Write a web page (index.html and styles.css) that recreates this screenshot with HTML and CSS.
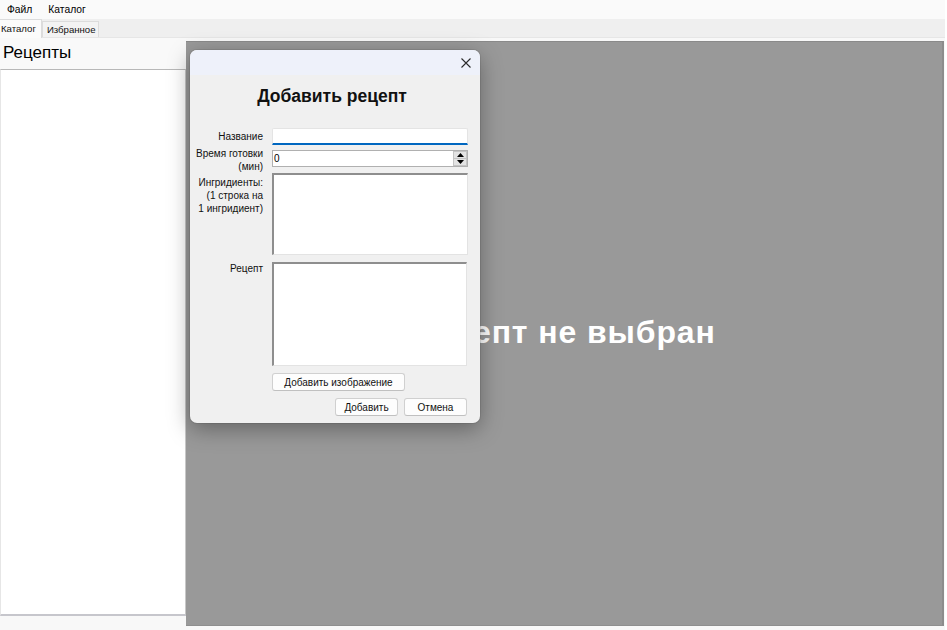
FILE: index.html
```html
<!DOCTYPE html>
<html lang="ru">
<head>
<meta charset="utf-8">
<title>Рецепты</title>
<link rel="stylesheet" href="styles.css">
</head>
<body>
<div class="window">
  <div class="menubar">
    <span class="menu-item">Файл</span>
    <span class="menu-item">Каталог</span>
  </div>
  <div class="tabstrip">
    <span class="tab tab-active">Каталог</span>
    <span class="tab">Избранное</span>
  </div>
  <div class="content">
    <div class="sidebar">
      <div class="sidebar-title">Рецепты</div>
      <div class="listbox"></div>
    </div>
    <div class="viewer">
      <div class="viewer-text">Рецепт не выбран</div>
    </div>
  </div>

  <div class="dialog">
    <div class="dialog-titlebar">
      <svg class="close-icon" width="10" height="10" viewBox="0 0 10 10"><path d="M0.5 0.5 L9.5 9.5 M9.5 0.5 L0.5 9.5" stroke="#2b2b2b" stroke-width="1.1" fill="none"/></svg>
    </div>
    <div class="dialog-body">
      <div class="dialog-heading">Добавить рецепт</div>
      <div class="form-row row-name">
        <div class="label label-single">Название</div>
        <div class="field input-name"></div>
      </div>
      <div class="form-row row-time">
        <div class="label">Время готовки<br>(мин)</div>
        <div class="field spinner">
          <span class="spinner-value">0</span>
          <span class="spinner-buttons">
            <span class="spin-btn"><svg width="7" height="4" viewBox="0 0 7 4"><path d="M3.5 0 L7 4 L0 4 Z" fill="#000"/></svg></span>
            <span class="spin-btn"><svg width="7" height="4" viewBox="0 0 7 4"><path d="M0 0 L7 0 L3.5 4 Z" fill="#000"/></svg></span>
          </span>
        </div>
      </div>
      <div class="form-row row-ingr">
        <div class="label label-ingr">Ингридиенты:<br>(1 строка на<br>1 ингридиент)</div>
        <div class="field textarea ta-ingr"></div>
      </div>
      <div class="form-row row-recipe">
        <div class="label label-recipe">Рецепт</div>
        <div class="field textarea ta-recipe"></div>
      </div>
      <div class="form-row row-image">
        <div class="label"></div>
        <button class="btn btn-image">Добавить изображение</button>
      </div>
      <div class="actions">
        <button class="btn btn-action">Добавить</button>
        <button class="btn btn-action">Отмена</button>
      </div>
    </div>
  </div>
</div>
</body>
</html>
```

FILE: styles.css
```css
* { box-sizing: border-box; }
html, body {
  margin: 0;
  padding: 0;
  width: 947px;
  height: 630px;
  overflow: hidden;
  background: #ffffff;
  font-family: "Liberation Sans", Arial, sans-serif;
  color: #000;
}
.window {
  position: relative;
  width: 945px;
  height: 630px;
  background: #f7f7f7;
  display: flex;
  flex-direction: column;
}
.menubar {
  height: 19px;
  background: #fafafa;
  display: flex;
  align-items: center;
  padding-left: 7px;
  gap: 16px;
  font-size: 10.3px;
}
.tabstrip {
  height: 19px;
  background: #efefef;
  display: flex;
  align-items: flex-end;
  border-bottom: 1px solid #e6e6e6;
}
.tab {
  font-size: 9.6px;
  height: 16px;
  line-height: 15px;
  padding: 0 2px 0 4px;
  color: #111;
  background: #f3f3f3;
  border: 1px solid #dcdcdc;
  border-bottom: none;
}
.tab-active {
  background: #fbfbfb;
  height: 19px;
  line-height: 17px;
  padding: 0 5px 0 1px;
  border-left: none;
  margin-bottom: -1px;
}
.content {
  flex: 1;
  display: flex;
  background: #f8f8f8;
}
.sidebar {
  width: 186px;
  display: flex;
  flex-direction: column;
  padding-bottom: 14px;
}
.sidebar-title {
  height: 31px;
  font-size: 17px;
  line-height: 28px;
  padding-left: 3px;
  padding-top: 1px;
  background: #f9f9f9;
}
.listbox {
  flex: 1;
  background: #ffffff;
  border-top: 1px solid #b8b8b8;
  border-left: 1px solid #e6e6e6;
  border-right: 1px solid #c8c8c8;
  border-bottom: 2px solid #c6c6cc;
}
.viewer {
  width: 758px;
  margin-top: 3px;
  margin-bottom: 4px;
  background: #999999;
  border-top: 1px solid #8a8a8a;
  border-right: 2px solid #8c8c8c;
  border-bottom: 1px solid #8f8f8f;
  display: flex;
  align-items: center;
  justify-content: center;
}
.viewer-text {
  color: #ffffff;
  font-weight: bold;
  font-size: 32px;
  letter-spacing: 0.9px;
  margin-top: -2px;
}

/* dialog overlays the main window */
.dialog {
  position: absolute;
  left: 190px;
  top: 50px;
  width: 290px;
  height: 373px;
  background: #f0f0f0;
  border-radius: 7px;
  overflow: hidden;
  box-shadow: 0 6px 22px rgba(0, 0, 0, 0.35), 0 0 0 1px rgba(0, 0, 0, 0.08);
}
.dialog-titlebar {
  height: 25px;
  background: #eef1fa;
  display: flex;
  align-items: center;
  justify-content: flex-end;
  padding-right: 9px;
}
.dialog-body {
  display: flex;
  flex-direction: column;
  font-size: 10px;
}
.dialog-heading {
  font-weight: bold;
  font-size: 17.5px;
  line-height: 22px;
  text-align: center;
  margin-top: 10px;
  margin-right: 6px;
  margin-bottom: 21px;
  color: #111;
}
.form-row {
  display: flex;
  gap: 9px;
}
.label {
  width: 73px;
  flex: none;
  text-align: right;
  line-height: 13px;
  color: #111;
  white-space: nowrap;
}
.label-single { line-height: 17px; }
.field {
  width: 196px;
  flex: none;
  background: #fff;
}
.input-name {
  height: 17px;
  border: 1px solid #e4e4e4;
  border-bottom: 2px solid #0067c0;
  border-radius: 2px 2px 0 0;
}
.row-time { margin-top: 2px; }
.row-time .label { height: 26px; }
.spinner {
  margin-top: 3px;
  height: 17px;
  border: 1px solid #b0b0b0;
  display: flex;
  align-items: center;
  justify-content: space-between;
  padding-left: 1px;
}
.spinner-value { font-size: 10px; line-height: 15px; }
.spinner-buttons {
  width: 14px;
  height: 15px;
  display: flex;
  flex-direction: column;
}
.spin-btn {
  flex: 1;
  background: #e3e3e3;
  border: 1px solid #c4c4c4;
  display: flex;
  align-items: center;
  justify-content: center;
}
.spin-btn + .spin-btn { border-top: none; }
.textarea {
  border-top: 2px solid #8e8e8e;
  border-left: 2px solid #8e8e8e;
  border-right: 1px solid #e3e3e3;
  border-bottom: 1px solid #e3e3e3;
}
.label-ingr { padding-top: 3px; }
.ta-ingr { height: 82px; }
.row-recipe { margin-top: 7px; }
.ta-recipe { height: 104px; width: 195px; }
.row-image { margin-top: 7px; }
.btn {
  font-family: "Liberation Sans", Arial, sans-serif;
  font-size: 10px;
  color: #111;
  background: #fdfdfd;
  border: 1px solid #d0d0d0;
  border-bottom-color: #c0c0c0;
  border-radius: 3px;
  height: 18px;
  padding: 0;
}
.btn-image { width: 133px; }
.actions {
  margin-top: 7px;
  display: flex;
  justify-content: flex-end;
  gap: 6px;
  padding-right: 13px;
}
.btn-action { width: 63px; }
```
